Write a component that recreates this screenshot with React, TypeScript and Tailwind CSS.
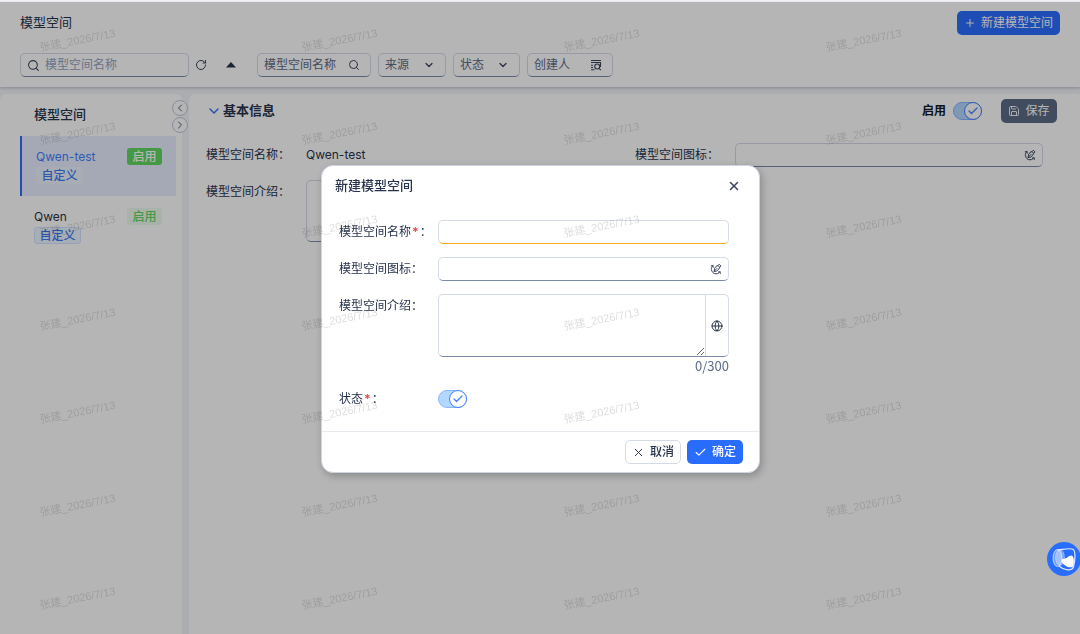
import { useState } from 'react';
import type { ReactNode } from 'react';
import { Check, ChevronDown, ChevronLeft, ChevronRight, Globe, Plus, RotateCw, Save, Search, X } from 'lucide-react';

const FIELD = 'rounded-[5px] border border-[#d5dae8] bg-white outline-none';

const SPACES = [
  { name: 'Qwen-test', kind: '自定义', state: '启用' },
  { name: 'Qwen', kind: '自定义', state: '启用' },
];

const MARKS = Array.from({ length: 28 }, (_, i) => i);

function EditIcon() {
  return (
    <svg viewBox="0 0 12 12" className="size-3 text-[#3b455c]" fill="none" stroke="currentColor" strokeWidth="1" strokeLinecap="round" strokeLinejoin="round">
      <path d="M3 2.500C1.600 3.500 1.200 5 1.400 6.500C1.800 9 3.600 10.800 6 10.800C7.800 10.800 9.200 10 10 8.800" />
      <path d="M1.200 2.800L3 2.500L3.200 4.300M10.400 10.400L10 8.800L8.400 9" />
      <path d="M4.200 8.200L4.600 5.400L6 3.400L8 2.600L9.600 4.200L8.800 6.200L7 7.800ZM8 2.600L9.300 1.200L11 2.900L9.600 4.200M4.200 8.200L7 5.400" />
    </svg>
  );
}

function PickIcon() {
  return (
    <svg viewBox="0 0 12 12" className="size-3" fill="none" stroke="currentColor" strokeWidth="1.1">
      <path d="M1 1.500H11M1 3.500H11M1 6.200H3M1 8.500H3M1 10.700H4.500" />
      <circle cx="7.200" cy="7.500" r="2.500" />
      <path d="M9 9.300L11 11.200M10.500 3.500V8" />
    </svg>
  );
}

function Toggle({ id }: { id: string }) {
  const [on, setOn] = useState(true);
  return (
    <span className="relative flex h-[18px] w-[29px] shrink-0">
      <input
        id={id}
        type="checkbox"
        checked={on}
        onChange={() => setOn(!on)}
        className="h-full w-full appearance-none rounded-full border border-[#87b5ff] bg-white checked:bg-[#b3d8ff]"
      />
      <span className={`pointer-events-none absolute top-0 flex size-[18px] items-center justify-center rounded-full border border-[#4280ff] bg-white text-[#4280ff] ${on ? 'right-0' : 'left-0'}`}>
        {on && <Check size={12} strokeWidth={2.5} />}
      </span>
    </span>
  );
}

function Filter({ label, width, icon }: { label: string; width: string; icon: ReactNode }) {
  return (
    <button className={`flex h-6 items-center justify-between border-b-[#7d89a8]! pr-[10px] pl-[6px] text-[#5e6b87] ${FIELD} ${width}`}>
      <span>{label}</span>
      <span className="text-[#3b455c]">{icon}</span>
    </button>
  );
}

function Header({ onCreate }: { onCreate: () => void }) {
  return (
    <header className="relative h-[85px] bg-white px-5 pt-[9px] shadow-[0_1px_3px_rgba(60,70,110,0.3)]">
      <div className="flex items-center justify-between">
        <h1 className="text-[13px]">模型空间</h1>
        <button onClick={onCreate} className="flex h-6 items-center gap-[5px] rounded-[5px] bg-[#296dff] px-[7px] text-white">
          <Plus size={12} strokeWidth={2} />
          新建模型空间
        </button>
      </div>
      <div className="mt-[18px] flex items-center">
        <div className={`flex h-6 w-[169px] items-center gap-[5px] border-b-[#7d89a8]! pl-[6px] ${FIELD}`}>
          <Search size={13} strokeWidth={2} className="shrink-0 text-[#3b455c]" />
          <input
            aria-label="模型空间名称"
            placeholder="模型空间名称"
            className="w-full min-w-0 bg-transparent outline-none placeholder:text-[#97a2c0]"
          />
        </div>
        <button aria-label="刷新" className="ml-[6px] text-[#3b455c]">
          <RotateCw size={12} strokeWidth={2} />
        </button>
        <button aria-label="收起" className="ml-[19px]">
          <svg viewBox="0 0 10 6" className="h-[6px] w-[10px] fill-[#28334d]">
            <path d="M5 0L10 5.500H0Z" />
          </svg>
        </button>
        <div className="ml-[21px] flex gap-[7px]">
          <Filter label="模型空间名称" width="w-[114px]" icon={<Search size={12} strokeWidth={2} />} />
          <Filter label="来源" width="w-[68px]" icon={<ChevronDown size={12} strokeWidth={2.5} />} />
          <Filter label="状态" width="w-[67px]" icon={<ChevronDown size={12} strokeWidth={2.5} />} />
          <Filter label="创建人" width="w-[86px]" icon={<PickIcon />} />
        </div>
      </div>
    </header>
  );
}

function Sidebar() {
  const [selected, setSelected] = useState(0);
  return (
    <aside className="relative w-[182px] shrink-0 rounded-t-md bg-white pr-[6px] pl-5">
      <h2 className="flex h-[42px] items-center pl-[14px] text-[13px] font-medium">模型空间</h2>
      <ul>
        {SPACES.map((s, i) => {
          const active = i === selected;
          return (
            <li key={s.name}>
              <button
                onClick={() => setSelected(i)}
                className={`flex h-[60px] w-full flex-col justify-center gap-[2px] pr-[14px] text-left ${active ? 'border-l-2 border-[#296dff] bg-[#e8efff] pl-[14px] text-[#4280ff]' : 'pl-[14px] text-[#28334d]'}`}
              >
                <span className="flex w-full items-center justify-between">
                  <span>{s.name}</span>
                  <span className={`flex h-[17px] w-[35px] items-center justify-center rounded-[3px] font-medium ${active ? 'bg-[#62d862] text-white' : 'bg-[#edfbed] text-[#62d862]'}`}>
                    {s.state}
                  </span>
                </span>
                <span className={`flex h-[17px] w-[47px] items-center justify-center rounded-[3px] border font-medium text-[#3d7bf5] ${active ? 'border-[#edf4ff] bg-[#edf4ff]' : 'border-[#d2e4ff] bg-[#edf5ff]'}`}>
                  {s.kind}
                </span>
              </button>
            </li>
          );
        })}
      </ul>
      <div className="absolute top-[6px] -right-[6px] z-10 flex flex-col gap-[1px] text-[#4f5a75]">
        <button aria-label="向左收起" className="flex size-4 items-center justify-center rounded-full border border-[#c3c8d8] bg-white">
          <ChevronLeft size={12} strokeWidth={2} />
        </button>
        <button aria-label="向右展开" className="flex size-4 items-center justify-center rounded-full border border-[#c3c8d8] bg-white">
          <ChevronRight size={12} strokeWidth={2} />
        </button>
      </div>
    </aside>
  );
}

function Detail() {
  return (
    <main className="min-w-0 flex-1 rounded-tl-md bg-white pl-[17px]">
      <div className="flex h-[34px] items-center pr-[23px]">
        <ChevronDown size={16} strokeWidth={2} className="text-[#296dff]" />
        <h2 className="ml-[1px] text-[13px] font-bold">基本信息</h2>
        <label htmlFor="enabled" className="mr-[7px] ml-auto font-bold text-[#111827]">启用</label>
        <Toggle id="enabled" />
        <button className="ml-[19px] flex h-6 w-14 items-center justify-center gap-[5px] rounded-[5px] bg-[#5e6b87] text-white">
          <Save size={12} strokeWidth={1.8} />
          保存
        </button>
      </div>
      <div className="mt-[15px] grid grid-cols-2 gap-x-[21px] gap-y-[13px] pr-[37px]">
        <div className="flex h-6 items-center">
          <span className="w-[100px] shrink-0">模型空间名称：</span>
          <span>Qwen-test</span>
        </div>
        <div className="flex h-6 items-center">
          <label htmlFor="icon" className="w-[100px] shrink-0">模型空间图标：</label>
          <div className={`flex h-6 min-w-0 flex-1 items-center border-b-[#7d89a8]! pr-[6px] ${FIELD}`}>
            <input id="icon" className="h-full min-w-0 flex-1 bg-transparent outline-none" />
            <EditIcon />
          </div>
        </div>
        <div className="flex">
          <label htmlFor="intro" className="h-6 w-[100px] shrink-0 leading-6">模型空间介绍：</label>
          <textarea id="intro" className={`h-[62px] min-w-0 flex-1 resize-none border-b-[#7d89a8]! ${FIELD}`} />
        </div>
      </div>
    </main>
  );
}

function Star() {
  return <span className="mx-[1px] font-bold text-[#e5484d]">*</span>;
}

function CreateDialog({ onClose }: { onClose: () => void }) {
  return (
    <div role="dialog" aria-labelledby="dialog-title" className="w-[439px] rounded-xl border border-[#cfd4e2] bg-white shadow-[2px_3px_9px_rgba(0,0,0,0.25)]">
      <div className="flex h-10 items-center justify-between pr-[18px] pl-[13px]">
        <h2 id="dialog-title" className="text-[13px] font-medium">新建模型空间</h2>
        <button aria-label="关闭" onClick={onClose} className="text-[#3b455c]">
          <X size={14} strokeWidth={2.5} />
        </button>
      </div>
      <form className="flex flex-col gap-[13px] pt-[14px] pr-[30px] pb-5 pl-[17px]">
        <div className="flex">
          <label htmlFor="new-name" className="w-[99px] shrink-0 leading-6">模型空间名称<Star />：</label>
          <input id="new-name" className={`h-6 min-w-0 flex-1 border-b-[#f2a91f]! px-2 ${FIELD}`} />
        </div>
        <div className="flex">
          <label htmlFor="new-icon" className="w-[99px] shrink-0 leading-6">模型空间图标：</label>
          <div className={`flex h-6 min-w-0 flex-1 items-center border-b-[#7d89a8]! pr-[6px] ${FIELD}`}>
            <input id="new-icon" className="h-full min-w-0 flex-1 bg-transparent px-2 outline-none" />
            <EditIcon />
          </div>
        </div>
        <div className="flex">
          <label htmlFor="new-intro" className="w-[99px] shrink-0 leading-6">模型空间介绍：</label>
          <div className="min-w-0 flex-1">
            <div className={`flex h-[63px] border-b-[#7d89a8]! ${FIELD}`}>
              <textarea id="new-intro" maxLength={300} className="min-w-0 flex-1 resize bg-transparent px-2 outline-none" />
              <button type="button" aria-label="语言" className="flex w-[23px] items-center justify-center border-l border-[#d5dae8]">
                <Globe size={12} strokeWidth={2} />
              </button>
            </div>
            <p className="text-right font-['Noto_Sans_CJK_SC','Noto_Sans',sans-serif] text-[13px] leading-[17px] text-[#5e6b87]">0/300</p>
          </div>
        </div>
        <div className="flex items-center">
          <label htmlFor="new-state" className="w-[99px] shrink-0 leading-6">状态<Star />：</label>
          <Toggle id="new-state" />
        </div>
      </form>
      <div className="flex h-[41px] items-center justify-end gap-[6px] border-t border-[#e8eaf0] pr-4">
        <button onClick={onClose} className="flex h-6 w-14 items-center justify-center gap-[5px] rounded-[5px] border border-[#d5dae8] bg-white font-medium">
          <X size={13} strokeWidth={1.8} />
          取消
        </button>
        <button onClick={onClose} className="flex h-6 w-14 items-center justify-center gap-[5px] rounded-[5px] bg-[#296dff] font-medium text-white">
          <Check size={13} strokeWidth={2} />
          确定
        </button>
      </div>
    </div>
  );
}

function Watermark() {
  return (
    <div aria-hidden="true" className="pointer-events-none fixed inset-0 z-30 overflow-hidden">
      <div className="grid grid-cols-[repeat(4,262px)] pt-8 pl-[39px]">
        {MARKS.map((i) => (
          <span key={i} className="h-[93px] font-['Liberation_Sans','Noto_Sans_CJK_SC',sans-serif] text-[11px] leading-4 text-black/14">
            <span className="inline-block -rotate-11">张建_2026/7/13</span>
          </span>
        ))}
      </div>
    </div>
  );
}

function Assistant() {
  return (
    <button aria-label="助手" className="fixed top-[542px] -right-[1px] z-40 size-[34px] rounded-full bg-[#296dff]">
      <svg viewBox="0 0 34 34" className="size-full" fill="none">
        <ellipse cx="10.500" cy="16" rx="4.500" ry="8.500" fill="#fff" fillOpacity="0.35" stroke="#fff" strokeOpacity="0.6" />
        <ellipse cx="13" cy="15.500" rx="4.500" ry="8" fill="#fff" fillOpacity="0.35" stroke="#fff" strokeOpacity="0.3" />
        <path d="M10.500 8C16 7.500 23 5.500 26.500 7.500C28.500 10 28 18 26.500 25C24.500 29.500 17 28.500 12 24" stroke="#fff" strokeOpacity="0.85" strokeWidth="1.200" />
        <path d="M16 17C19.500 17 21.500 13.500 24.500 13.500C27.200 14 27.500 21 26 24.500C23 27 17 23.500 15 20.500C14.200 18.500 14.500 17 16 17Z" fill="#fff" />
      </svg>
    </button>
  );
}

export default function App() {
  const [open, setOpen] = useState(true);

  return (
    <div className="flex min-h-screen flex-col bg-[#f3f4f8] pt-[2px] font-['Inter','Noto_Sans_CJK_SC',sans-serif] text-xs text-[#28334d]">
      <Header onCreate={() => setOpen(true)} />
      <div className="mt-[7px] flex flex-1 gap-[7px]">
        <Sidebar />
        <Detail />
      </div>
      {open && (
        <div className="fixed inset-x-0 top-[2px] bottom-0 z-20 flex items-center justify-center bg-black/29 pt-[2px] pl-[1px]">
          <CreateDialog onClose={() => setOpen(false)} />
        </div>
      )}
      <Watermark />
      <Assistant />
    </div>
  );
}
